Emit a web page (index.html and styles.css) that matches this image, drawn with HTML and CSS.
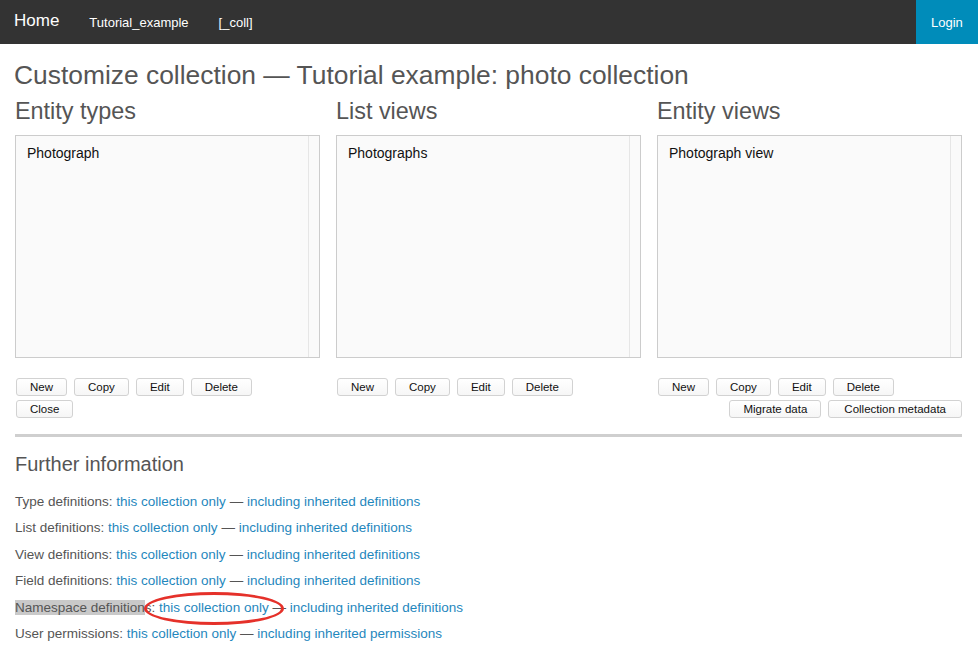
FILE: index.html
```html
<!DOCTYPE html>
<html>
<head>
<meta charset="utf-8">
<link rel="stylesheet" href="styles.css">
</head>
<body>
<nav class="topbar">
  <a class="brand" href="#">Home</a>
  <a class="navlink" href="#">Tutorial_example</a>
  <a class="navlink" href="#">[_coll]</a>
  <span class="spacer"></span>
  <a class="login" href="#">Login</a>
</nav>
<main class="page">
  <h1 class="title">Customize collection — Tutorial example: photo collection</h1>
  <div class="columns">
    <section class="col">
      <h2 class="colhead">Entity types</h2>
      <div class="listbox"><div class="items"><div class="item">Photograph</div></div><div class="scroll"></div></div>
      <div class="btnrow"><button class="btn">New</button><button class="btn">Copy</button><button class="btn">Edit</button><button class="btn">Delete</button></div>
      <div class="btnrow"><button class="btn">Close</button></div>
    </section>
    <section class="col">
      <h2 class="colhead">List views</h2>
      <div class="listbox"><div class="items"><div class="item">Photographs</div></div><div class="scroll"></div></div>
      <div class="btnrow"><button class="btn">New</button><button class="btn">Copy</button><button class="btn">Edit</button><button class="btn">Delete</button></div>
    </section>
    <section class="col">
      <h2 class="colhead">Entity views</h2>
      <div class="listbox"><div class="items"><div class="item">Photograph view</div></div><div class="scroll"></div></div>
      <div class="btnrow"><button class="btn">New</button><button class="btn">Copy</button><button class="btn">Edit</button><button class="btn">Delete</button></div>
      <div class="btnrow right"><button class="btn">Migrate data</button><button class="btn wide">Collection metadata</button></div>
    </section>
  </div>
  <hr class="rule">
  <h3 class="further">Further information</h3>
  <ul class="info">
    <li>Type definitions: <a href="#">this collection only</a> — <a href="#">including inherited definitions</a></li>
    <li>List definitions: <a href="#">this collection only</a> — <a href="#">including inherited definitions</a></li>
    <li>View definitions: <a href="#">this collection only</a> — <a href="#">including inherited definitions</a></li>
    <li>Field definitions: <a href="#">this collection only</a> — <a href="#">including inherited definitions</a></li>
    <li><span class="hl">Namespace definition</span>s: <a class="circled" href="#">this collection only<span class="ring"></span></a> — <a href="#">including inherited definitions</a></li>
    <li>User permissions: <a href="#">this collection only</a> — <a href="#">including inherited permissions</a></li>
  </ul>
</main>
</body>
</html>
```

FILE: styles.css
```css
html, body {
  margin: 0;
  padding: 0;
  background: #fff;
  font-family: "Liberation Sans", Arial, sans-serif;
  color: #222;
}
a { text-decoration: none; }

.topbar {
  display: flex;
  align-items: center;
  height: 44px;
  background: #333;
}
.brand {
  color: #fff;
  font-size: 17px;
  padding: 0 15px 2px 14px;
}
.navlink {
  color: #fff;
  font-size: 13px;
  padding: 0 15px;
}
.spacer { flex: 1; }
.login {
  align-self: stretch;
  display: flex;
  align-items: center;
  background: #008cba;
  color: #fff;
  font-size: 13px;
  padding: 1px 15px 0 15px;
  width: 32px;
}

.page {
  padding: 0 16px 0 15px;
}
.title {
  font-size: 26.4px;
  font-weight: normal;
  color: #555;
  margin: 16px 0 0 -1px;
  line-height: 30px;
}
.columns {
  display: grid;
  grid-template-columns: repeat(3, 305px);
  column-gap: 16px;
  margin-top: 8px;
}
.colhead {
  font-size: 23.4px;
  font-weight: normal;
  color: #555;
  margin: 0 0 11px 0;
  line-height: 26px;
}
.listbox {
  display: flex;
  height: 221px;
  border: 1px solid #ccc;
  background: #fafafa;
}
.items {
  flex: 1;
  padding: 9px 11px;
}
.item {
  font-size: 14px;
  color: #111;
}
.scroll {
  width: 10px;
  border-left: 1px solid #e6e6e6;
}
.btnrow {
  display: flex;
  gap: 7px;
  margin-left: 1px;
}
.listbox + .btnrow { margin-top: 20px; }
.btnrow + .btnrow { margin-top: 4px; }
.btnrow.right { justify-content: flex-end; }
.btn {
  font-family: "Liberation Sans", Arial, sans-serif;
  font-size: 11.5px;
  height: 18px;
  line-height: 15px;
  padding: 0 13px;
  border: 1px solid #d2d2d2;
  border-radius: 3px;
  background: linear-gradient(#fff, #f6f6f6);
  color: #111;
}
.btn.wide { padding: 0 15px; }

.rule {
  border: 0;
  height: 3px;
  background: #cfcfcf;
  margin: 16px 0 0 0;
}
.further {
  font-size: 20px;
  font-weight: normal;
  color: #555;
  margin: 16px 0 0 0;
  line-height: 22px;
}
.info {
  list-style: none;
  padding: 0;
  margin: 18px 0 0 0;
  font-size: 13.5px;
  color: #555;
}
.info li {
  line-height: 17px;
  margin-bottom: 9.4px;
}
.info a { color: #1f87bd; }
.hl { background: #c9c9c9; }
.circled { position: relative; }
.ring {
  position: absolute;
  left: -15px;
  top: -8px;
  width: 134px;
  height: 27px;
  border: 3px solid #e5312a;
  border-radius: 50%;
  pointer-events: none;
}
```
